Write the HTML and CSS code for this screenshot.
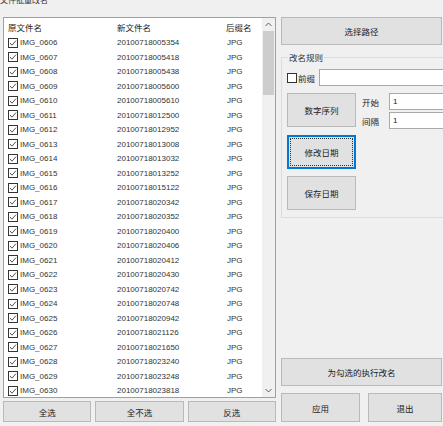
FILE: index.html
```html
<!DOCTYPE html>
<html lang="zh">
<head>
<meta charset="utf-8">
<title>文件批量改名</title>
<link rel="stylesheet" href="styles.css">
</head>
<body>
<div class="window">
  <div class="titlebar"><span class="title">文件批量改名</span></div>
  <div class="main">
    <div class="left">
      <div class="listbox">
        <div class="table">
          <div class="row head">
            <div class="c1">原文件名</div><div class="c2">新文件名</div><div class="c3">后缀名</div>
          </div>
          <div id="rows"></div>
        </div>
        <div class="vscroll">
          <div class="arrow"><svg width="7" height="5" viewBox="0 0 7 5"><polyline points="0.5,4 3.5,1 6.5,4" fill="none" stroke="#606060" stroke-width="1"/></svg></div>
          <div class="track"><div class="thumb"></div></div>
          <div class="arrow"><svg width="7" height="5" viewBox="0 0 7 5"><polyline points="0.5,1 3.5,4 6.5,1" fill="none" stroke="#606060" stroke-width="1"/></svg></div>
        </div>
      </div>
      <div class="btnrow">
        <button class="btn">全选</button>
        <button class="btn">全不选</button>
        <button class="btn">反选</button>
      </div>
    </div>
    <div class="right">
      <button class="btn big">选择路径</button>
      <fieldset class="group">
        <legend>改名规则</legend>
        <div class="prefix-row">
          <span class="cb"></span><span class="lbl">前缀</span><span class="input wide"></span>
        </div>
        <div class="seq-row">
          <button class="btn tall">数字序列</button>
          <div class="seq-fields">
            <div class="field"><span class="lbl2">开始</span><span class="input">1</span></div>
            <div class="field"><span class="lbl2">间隔</span><span class="input">1</span></div>
          </div>
        </div>
        <button class="btn tall focus">修改日期</button>
        <button class="btn tall save">保存日期</button>
      </fieldset>
      <div class="bottom">
        <button class="btn big">为勾选的执行改名</button>
        <div class="okrow">
          <button class="btn ok">应用</button>
          <button class="btn cancel">退出</button>
        </div>
      </div>
    </div>
  </div>
</div>
<script>
var data = [
["0606","20100718005354"],["0607","20100718005418"],["0608","20100718005438"],
["0609","20100718005600"],["0610","20100718005610"],["0611","20100718012500"],
["0612","20100718012952"],["0613","20100718013008"],["0614","20100718013032"],
["0615","20100718013252"],["0616","20100718015122"],["0617","20100718020342"],
["0618","20100718020352"],["0619","20100718020400"],["0620","20100718020406"],
["0621","20100718020412"],["0622","20100718020430"],["0623","20100718020742"],
["0624","20100718020748"],["0625","20100718020942"],["0626","20100718021126"],
["0627","20100718021650"],["0628","20100718023240"],["0629","20100718023248"],
["0630","20100718023818"]];
var html = "";
var check = '<svg class="chk" width="10" height="10" viewBox="0 0 10 10"><rect x="0.5" y="0.5" width="9" height="9" fill="#fff" stroke="#333"/><polyline points="2,5 4,7.2 8,2.6" fill="none" stroke="#555" stroke-width="1"/></svg>';
for (var i = 0; i < data.length; i++) {
  html += '<div class="row"><div class="c1">' + check + '<span>IMG_' + data[i][0] + '</span></div><div class="c2">' + data[i][1] + '</div><div class="c3">JPG</div></div>';
}
document.getElementById("rows").innerHTML = html;
</script>
</body>
</html>
```

FILE: styles.css
```css
html, body {
  margin: 0;
  padding: 0;
  background: #f0f0f0;
}
.window {
  width: 443px;
  height: 426px;
  overflow: hidden;
  display: flex;
  flex-direction: column;
  font-family: "Noto Sans CJK SC", "Liberation Sans", sans-serif;
  color: #222;
}
.titlebar {
  height: 17px;
  flex: none;
  overflow: hidden;
}
.title {
  display: block;
  font-size: 8px;
  line-height: 10px;
  margin-top: -5px;
  color: #333;
}
.main {
  flex: 1;
  display: flex;
  gap: 5px;
  padding-left: 3px;
  padding-bottom: 4px;
  min-height: 0;
}
.left {
  width: 273px;
  flex: none;
  display: flex;
  flex-direction: column;
  gap: 3px;
}
.listbox {
  height: 381px;
  box-sizing: border-box;
  border: 1px solid #a0a0a0;
  background: #fff;
  display: flex;
  overflow: hidden;
}
.table {
  flex: 1;
  overflow: hidden;
}
.row {
  display: grid;
  grid-template-columns: 113px 108px 1fr;
  height: 14.5px;
  align-items: center;
  font-family: "Liberation Sans", "Noto Sans CJK SC", sans-serif;
  font-size: 8px;
  color: #333;
  white-space: nowrap;
}
.row .c1 {
  padding-left: 3.5px;
  display: flex;
  align-items: center;
  gap: 2.5px;
}
.row .c3 {
  padding-left: 2px;
}
.row.head {
  height: 17.5px;
  font-family: "Noto Sans CJK SC", sans-serif;
  font-size: 8.5px;
  color: #222;
}
.row.head .c1 {
  padding-left: 4px;
}
.row.head .c3 {
  padding-left: 1px;
}
.chk {
  display: block;
  flex: none;
}
.vscroll {
  width: 13px;
  flex: none;
  background: #f0f0f0;
  display: flex;
  flex-direction: column;
}
.arrow {
  height: 13px;
  display: flex;
  align-items: center;
  justify-content: center;
  flex: none;
}
.track {
  flex: 1;
  padding: 0 1px;
}
.thumb {
  height: 64px;
  background: #cdcdcd;
}
.btnrow {
  display: flex;
  gap: 4px;
  height: 21px;
}
.btn {
  font-family: "Noto Sans CJK SC", sans-serif;
  font-size: 8.5px;
  color: #222;
  background: #e1e1e1;
  border: 1px solid #b9b9b9;
  box-sizing: border-box;
  margin: 0;
  padding: 0;
  white-space: nowrap;
}
.btnrow .btn {
  flex: 1;
  height: 21px;
}
.right {
  width: 162px;
  flex: none;
  display: flex;
  flex-direction: column;
}
.btn.big {
  height: 28px;
  width: 161px;
}
.group {
  margin: 7px 0 0 0;
  padding: 0 0 7px 5px;
  border: 1px solid #dcdcdc;
  border-right: none;
  min-width: 0;
  display: flex;
  flex-direction: column;
  align-items: flex-start;
}
.group legend {
  font-size: 8.5px;
  line-height: 10px;
  padding: 0 1px;
  margin-left: 1px;
  color: #333;
}
.prefix-row {
  margin-top: 7px;
  display: flex;
  align-items: center;
  height: 17px;
  align-self: stretch;
}
.cb {
  width: 10px;
  height: 10px;
  box-sizing: border-box;
  border: 1px solid #333;
  background: #fff;
  flex: none;
}
.lbl {
  font-size: 8.5px;
  margin-left: 1px;
  color: #222;
  white-space: nowrap;
  flex: none;
}
.input {
  display: block;
  height: 17px;
  box-sizing: border-box;
  border: 1px solid #a9a9a9;
  border-right: none;
  background: #fff;
  font-family: "Liberation Sans", sans-serif;
  font-size: 8px;
  line-height: 15px;
  padding-left: 3px;
  color: #222;
}
.input.wide {
  flex: 1;
  min-width: 0;
  margin-left: 4px;
}
.seq-row {
  margin-top: 7px;
  display: flex;
  gap: 6px;
  align-self: stretch;
}
.btn.tall {
  width: 69px;
  height: 34px;
  flex: none;
}
.seq-fields {
  display: flex;
  flex-direction: column;
  gap: 2px;
  flex: 1;
}
.field {
  display: flex;
  align-items: center;
  height: 17px;
}
.lbl2 {
  font-size: 8.5px;
  width: 27px;
  flex: none;
  color: #222;
  white-space: nowrap;
}
.field .input {
  flex: 1;
}
.btn.focus {
  margin-top: 6px;
  border: 2px solid #0078d7;
  outline: 1px dotted #333;
  outline-offset: -4px;
}
.btn.save {
  margin-top: 7px;
}
.bottom {
  margin-top: auto;
  display: flex;
  flex-direction: column;
  gap: 7px;
}
.okrow {
  display: flex;
  gap: 8px;
}
.btn.ok {
  width: 79px;
  height: 29px;
}
.btn.cancel {
  width: 74px;
  height: 29px;
}
```
